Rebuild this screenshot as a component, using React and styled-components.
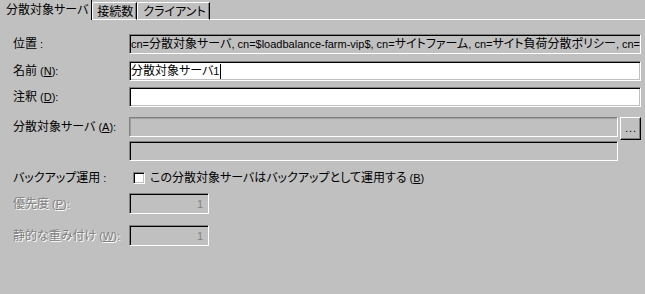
import React from "react";
import styled, { createGlobalStyle, css } from "styled-components";

const Global = createGlobalStyle`
  html, body { margin: 0; padding: 0; background: #c0c0c0; }
  body { width: 645px; height: 294px; overflow: hidden; }
`;

const Window = styled.div`
  width: 645px;
  height: 294px;
  box-sizing: border-box;
  background: #c0c0c0;
  font-family: "Liberation Sans", "Noto Sans CJK JP", sans-serif;
  font-size: 12px;
  line-height: 14px;
  color: #000;
  font-feature-settings: "palt";
  display: flex;
  flex-direction: column;
  overflow: hidden;
`;

const Latin = styled.span`
  font-size: 11px;
`;

const Mn = styled.span`
  font-size: 11px;
  text-decoration: underline;
  text-underline-offset: 1px;
`;

/* wraps ASCII runs so Latin glyphs get the narrower UI size */
function T({ children }) {
  const parts = String(children).split(/([\x20-\x7e]+)/);
  return parts.map((p, i) =>
    p === "" ? null : /^[\x20-\x7e]+$/.test(p) ? <Latin key={i}>{p}</Latin> : <React.Fragment key={i}>{p}</React.Fragment>
  );
}

const TabStrip = styled.div`
  display: flex;
  align-items: flex-end;
  height: 20px;
  flex: none;
`;

const Tab = styled.div`
  box-sizing: border-box;
  display: flex;
  align-items: center;
  white-space: nowrap;
  padding: 0 ${(p) => p.$pr}px 0 ${(p) => p.$pl}px;
  ${(p) =>
    p.$active
      ? css`
          height: 20px;
          padding-bottom: 1px;
          border-right: 1px solid #000;
        `
      : css`
          height: 18px;
          padding-top: 1px;
          border-style: solid;
          border-width: 1px;
          border-color: #fff #000 #fff #fff;
          border-top-left-radius: 2px;
          box-shadow: inset -1px 0 0 #808080;
        `}
`;

const TabFiller = styled.div`
  flex: 1;
  border-bottom: 1px solid #fff;
`;

const Form = styled.div`
  display: flex;
  flex-direction: column;
  padding: 14px 4px 0 13px;
`;

const Row = styled.div`
  display: flex;
  align-items: ${(p) => (p.$top ? "flex-start" : "center")};
  margin-top: ${(p) => p.$mt || 0}px;
`;

const Label = styled.div`
  width: 116px;
  flex: none;
  white-space: nowrap;
  padding-top: ${(p) => p.$pt || 0}px;
  color: ${(p) => (p.$disabled ? "#808080" : "#000")};
  text-shadow: ${(p) => (p.$disabled ? "1px 1px 0 #fff" : "none")};
`;

const Field = styled.div`
  box-sizing: border-box;
  width: ${(p) => (p.$w ? `${p.$w}px` : "auto")};
  flex: ${(p) => (p.$w ? "none" : "1")};
  min-width: 0;
  height: ${(p) => p.$h || 20}px;
  background: ${(p) => (p.$white ? "#fff" : "#c0c0c0")};
  color: ${(p) => (p.$disabled ? "#808080" : "#000")};
  border-style: solid;
  border-width: 1px;
  border-color: #808080 #fff #fff #808080;
  box-shadow: ${(p) =>
    p.$flat
      ? "inset 1px 1px 0 #a0a0a0, inset -1px -1px 0 #c0c0c0"
      : "inset 1px 1px 0 #000, inset -1px -1px 0 #c0c0c0"};
  padding: 0 ${(p) => (p.$right ? 5 : 1)}px 0 1px;
  display: flex;
  align-items: center;
  justify-content: ${(p) => (p.$right ? "flex-end" : "flex-start")};
  white-space: nowrap;
  overflow: hidden;
`;

const Caret = styled.span`
  display: inline-block;
  flex: none;
  width: 1px;
  height: 15px;
  background: #000;
  margin-left: 1px;
`;

const ServerGrid = styled.div`
  display: grid;
  grid-template-columns: 489px 21px;
  grid-template-rows: 20px 4px 20px;
  column-gap: 2px;
`;

const BrowseButton = styled.button`
  grid-row: 1 / 3;
  grid-column: 2;
  align-self: start;
  box-sizing: border-box;
  width: 21px;
  height: 23px;
  margin: 0;
  padding: 0 0 5px 1px;
  background: #c0c0c0;
  border-style: solid;
  border-width: 1px;
  border-color: #fff #000 #000 #fff;
  box-shadow: inset -1px -1px 0 #808080;
  font-family: "Liberation Sans", sans-serif;
  font-size: 11px;
  line-height: 11px;
  letter-spacing: 1px;
  color: #000;
  display: flex;
  align-items: flex-end;
  justify-content: center;
`;

const ServerFieldTop = styled(Field)`
  grid-column: 1;
  grid-row: 1;
`;

const ServerFieldBottom = styled(Field)`
  grid-column: 1;
  grid-row: 3;
`;

const CheckWrap = styled.label`
  display: flex;
  align-items: center;
  gap: 5px;
  padding-left: 4px;
  white-space: nowrap;
`;

const CheckBox = styled.span`
  box-sizing: border-box;
  width: 12px;
  height: 12px;
  flex: none;
  background: #fff;
  border-style: solid;
  border-width: 1px;
  border-color: #808080 #fff #fff #808080;
  box-shadow: inset 1px 1px 0 #000, inset -1px -1px 0 #c0c0c0;
`;

export default function App() {
  return (
    <>
      <Global />
      <Window>
        <TabStrip>
          <Tab $active $pl={6} $pr={3}>分散対象サーバ</Tab>
          <Tab $pl={4} $pr={3}>接続数</Tab>
          <Tab $pl={5} $pr={3}>クライアント</Tab>
          <TabFiller />
        </TabStrip>
        <Form>
          <Row>
            <Label><T>位置 :</T></Label>
            <Field>
              <T>cn=分散対象サーバ, cn=$loadbalance-farm-vip$, cn=サイトファーム, cn=サイト負荷分散ポリシー, cn=lb</T>
            </Field>
          </Row>
          <Row $mt={7}>
            <Label>
              <T>名前 (</T><Mn>N</Mn><Latin>):</Latin>
            </Label>
            <Field $white>
              <T>分散対象サーバ1</T>
              <Caret />
            </Field>
          </Row>
          <Row $mt={6}>
            <Label>
              <T>注釈 (</T><Mn>D</Mn><Latin>):</Latin>
            </Label>
            <Field $white />
          </Row>
          <Row $mt={10} $top>
            <Label $pt={3}>
              <T>分散対象サーバ (</T><Mn>A</Mn><Latin>):</Latin>
            </Label>
            <ServerGrid>
              <ServerFieldTop $flat />
              <BrowseButton type="button">...</BrowseButton>
              <ServerFieldBottom />
            </ServerGrid>
          </Row>
          <Row $mt={10}>
            <Label><T>バックアップ運用 :</T></Label>
            <CheckWrap>
              <CheckBox />
              <span>
                <T>この分散対象サーバはバックアップとして運用する (</T><Mn>B</Mn><Latin>)</Latin>
              </span>
            </CheckWrap>
          </Row>
          <Row $mt={8}>
            <Label $disabled>
              <T>優先度 (</T><Mn>P</Mn><Latin>):</Latin>
            </Label>
            <Field $w={80} $h={21} $disabled $right>
              <Latin>1</Latin>
            </Field>
          </Row>
          <Row $mt={11}>
            <Label $disabled>
              <T>静的な重み付け (</T><Mn>W</Mn><Latin>):</Latin>
            </Label>
            <Field $w={80} $h={21} $disabled $right>
              <Latin>1</Latin>
            </Field>
          </Row>
        </Form>
      </Window>
    </>
  );
}
